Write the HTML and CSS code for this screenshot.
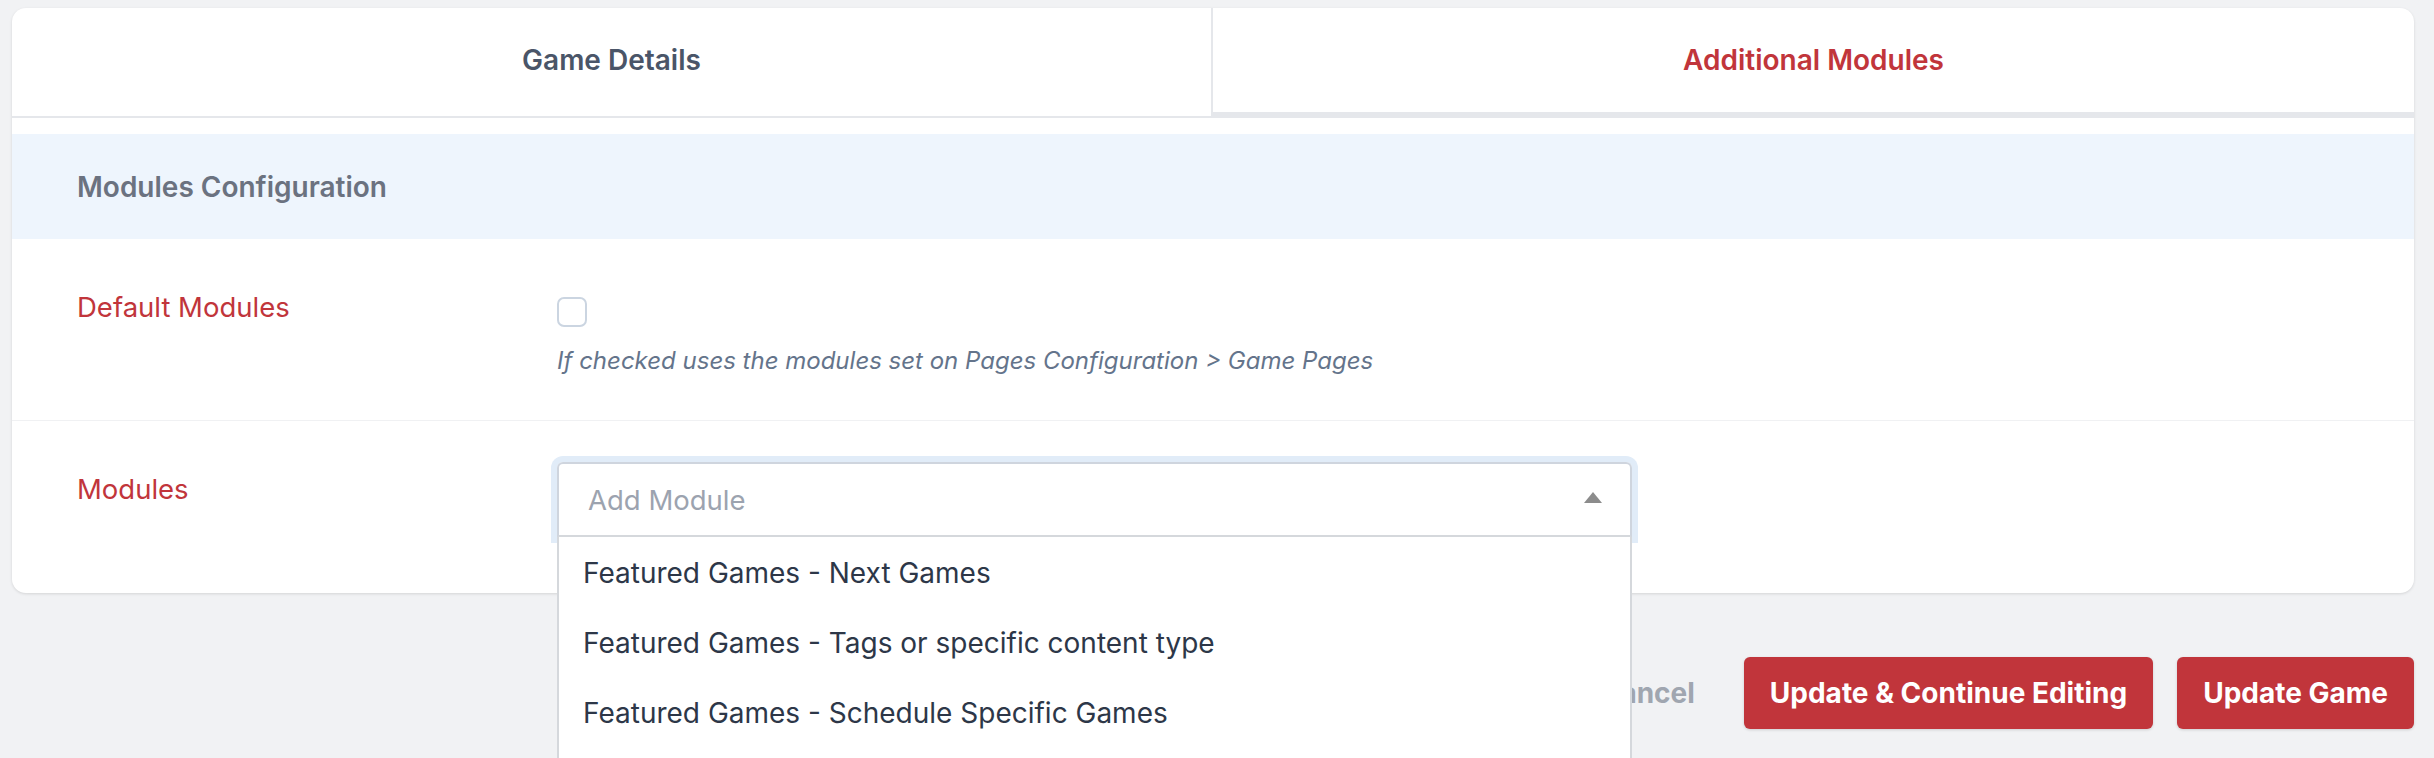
FILE: index.html
```html
<!DOCTYPE html>
<html lang="en">
  <head>
    <meta charset="UTF-8" />
    <meta name="viewport" content="width=device-width, initial-scale=1.0" />
    <title>Edit Game</title>
    <link rel="stylesheet" href="styles.css">
  </head>
  <body>
    <div class="card">
      <div class="tabs">
        <div class="tab">Game Details</div>
        <div class="tab tab-active">Additional Modules</div>
      </div>

      <div class="section-head">Modules Configuration</div>

      <div class="row row-bordered">
        <label class="row-label">Default Modules</label>
        <div class="row-field">
          <span class="checkbox"></span>
          <p class="help">If checked uses the modules set on Pages Configuration &gt; Game Pages</p>
        </div>
      </div>

      <div class="row">
        <label class="row-label">Modules</label>
        <div class="row-field">
          <div class="select">
            <div class="select-box">
              <span class="placeholder">Add Module</span>
              <span class="caret"></span>
            </div>
            <ul class="menu">
              <li>Featured Games - Next Games</li>
              <li>Featured Games - Tags or specific content type</li>
              <li>Featured Games - Schedule Specific Games</li>
            </ul>
          </div>
        </div>
      </div>
    </div>

    <div class="actions">
      <a class="cancel" href="#">Cancel</a>
      <button class="btn">Update &amp; Continue Editing</button>
      <button class="btn">Update Game</button>
    </div>
  </body>
</html>
```

FILE: styles.css
```css
body {
  font-family: Inter, "Noto Sans", sans-serif;
  background-color: #f1f2f4;
  margin: 0;
  padding: 8px 20px 90px 12px;
}

.card {
  background-color: #ffffff;
  border-radius: 14px;
  box-shadow: 0 1px 3px rgba(0, 0, 0, 0.12);
}

.tabs {
  display: grid;
  grid-template-columns: 1fr 1fr;
  height: 110px;
}

.tab {
  display: flex;
  align-items: center;
  justify-content: center;
  box-sizing: border-box;
  padding-bottom: 4px;
  font-size: 28px;
  font-weight: 600;
  color: #4a5568;
  border-bottom: 2px solid #e5e7eb;
  border-right: 2px solid #e5e7eb;
}

.tab-active {
  color: #c1353b;
  border-right: none;
  border-bottom: 6px solid #e5e7eb;
  padding-bottom: 0;
}

.section-head {
  margin-top: 16px;
  height: 105px;
  display: flex;
  align-items: center;
  padding-left: 65px;
  background-color: #eef5fd;
  font-size: 28px;
  font-weight: 600;
  color: #6b7280;
}

.row {
  display: grid;
  grid-template-columns: 480px 1fr;
  padding: 41px 65px 56px;
}

.row-bordered {
  padding-bottom: 41px;
  border-bottom: 1px solid #f0f1f3;
}

.row-label {
  margin-top: 7px;
  font-size: 27.5px;
  line-height: 40px;
  color: #c1353b;
}

.row-field {
  display: flex;
  flex-direction: column;
  align-items: flex-start;
}

.checkbox {
  display: block;
  width: 30px;
  height: 30px;
  box-sizing: border-box;
  margin-top: 17px;
  border: 2px solid #cbd5e1;
  border-radius: 7px;
}

.help {
  margin: 16px 0 0;
  font-size: 24px;
  line-height: 36px;
  font-style: italic;
  color: #64748b;
}

.select {
  position: relative;
  width: 1075px;
}

.select-box {
  display: flex;
  align-items: center;
  justify-content: space-between;
  height: 75px;
  box-sizing: border-box;
  padding: 0 28px 0 29px;
  border: 2px solid #cfd5de;
  border-bottom-color: #d5d8dc;
  border-radius: 6px 6px 0 0;
  box-shadow: 0 0 0 6px #e1ecf8;
  font-size: 27.5px;
}

.placeholder {
  color: #9ca3af;
}

.caret {
  width: 0;
  height: 0;
  margin-top: -4px;
  border-left: 9px solid transparent;
  border-right: 9px solid transparent;
  border-bottom: 11px solid #8c8c8c;
}

.menu {
  position: absolute;
  top: 100%;
  left: 0;
  right: 0;
  z-index: 10;
  margin: 0;
  padding: 1px 0 60px;
  list-style: none;
  background-color: #ffffff;
  border-left: 2px solid #d5d8dc;
  border-right: 2px solid #d5d8dc;
}

.menu li {
  height: 70px;
  line-height: 70px;
  padding-left: 24px;
  font-size: 28px;
  color: #2d3748;
}

.actions {
  display: flex;
  justify-content: flex-end;
  align-items: center;
  gap: 24px;
  margin-top: 64px;
}

.cancel {
  margin-right: 25px;
  font-size: 28px;
  font-weight: 700;
  color: #a0a6b0;
  text-decoration: none;
}

.btn {
  height: 72px;
  padding: 0 26px;
  border: none;
  border-radius: 6px;
  background-color: #c1353b;
  color: #ffffff;
  font-family: inherit;
  font-size: 28px;
  font-weight: 700;
  box-shadow: 0 1px 3px rgba(0, 0, 0, 0.15);
}
```
